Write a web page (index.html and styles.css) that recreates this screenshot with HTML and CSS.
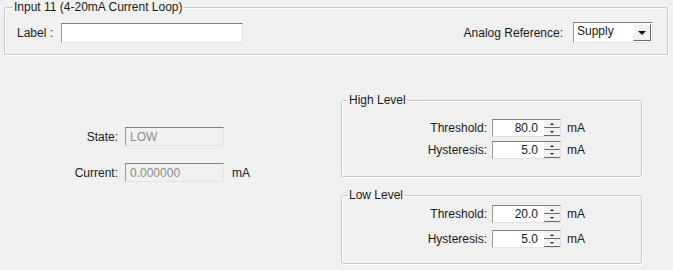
FILE: index.html
```html
<!DOCTYPE html>
<html lang="en">

<head>
  <meta charset="UTF-8">
  <title>Input 11 Settings</title>
  <link rel="stylesheet" href="styles.css">
</head>

<body>

  <!-- Input Header Group -->
  <fieldset class="group group-input">
    <legend>Input 11 (4-20mA Current Loop)</legend>
    <div class="top-row">
      <label class="field">
        <span>Label :</span>
        <input type="text" class="text-box label-box">
      </label>
      <label class="field">
        <span>Analog Reference:</span>
        <span class="combo">
          <span class="combo-value">Supply</span>
          <span class="combo-btn"><span class="arrow-down"></span></span>
        </span>
      </label>
    </div>
  </fieldset>

  <div class="main">

    <!-- Live Status -->
    <div class="status">
      <span class="status-label">State:</span>
      <span class="text-box readonly">LOW</span>
      <span></span>

      <span class="status-label">Current:</span>
      <span class="text-box readonly">0.000000</span>
      <span class="unit">mA</span>
    </div>

    <!-- Level Settings -->
    <div class="levels">
      <fieldset class="group level high">
        <legend>High Level</legend>
        <div class="level-grid">
          <span class="level-label">Threshold:</span>
          <span class="spin"><span class="spin-value">80.0</span><span class="spin-btns"><span class="spin-up"></span><span class="spin-down"></span></span></span>
          <span class="unit">mA</span>

          <span class="level-label">Hysteresis:</span>
          <span class="spin"><span class="spin-value">5.0</span><span class="spin-btns"><span class="spin-up"></span><span class="spin-down"></span></span></span>
          <span class="unit">mA</span>
        </div>
      </fieldset>

      <fieldset class="group level low">
        <legend>Low Level</legend>
        <div class="level-grid">
          <span class="level-label">Threshold:</span>
          <span class="spin"><span class="spin-value">20.0</span><span class="spin-btns"><span class="spin-up"></span><span class="spin-down"></span></span></span>
          <span class="unit">mA</span>

          <span class="level-label">Hysteresis:</span>
          <span class="spin"><span class="spin-value">5.0</span><span class="spin-btns"><span class="spin-up"></span><span class="spin-down"></span></span></span>
          <span class="unit">mA</span>
        </div>
      </fieldset>
    </div>

  </div>

</body>

</html>
```

FILE: styles.css
```css
/* General Page Styles */
body {
  margin: 0;
  background: #f0f0f0;
  font-family: 'Liberation Sans', Arial, sans-serif;
  font-size: 12px;
  color: #1a1a1a;
  width: 673px;
  height: 270px;
  overflow: hidden;
}

/* Group Boxes */
.group {
  border: 1px solid #c9c9c9;
  border-radius: 2px;
  margin: 0;
  min-width: 0;
  box-shadow: inset 1px 1px 0 #fff, 1px 1px 0 #fff;
}

.group legend {
  padding: 0 1px;
  margin-left: 6px;
  line-height: 14px;
}

.group-input {
  margin: 0 5px 0 4px;
  padding: 8px 14px 11px 12px;
}

.group-input legend {
  margin-left: -4px;
}

.top-row {
  display: flex;
  justify-content: space-between;
  align-items: center;
}

.field {
  display: flex;
  align-items: center;
  gap: 8px;
}

.field + .field {
  gap: 10px;
}

/* Text Boxes */
.text-box {
  box-sizing: border-box;
  height: 20px;
  border: 1px solid #e3e3e3;
  border-top-color: #7f7f7f;
  border-left-color: #9a9a9a;
  background: #fff;
  font: inherit;
  padding: 0 4px;
  margin: 0;
  outline: none;
}

.label-box {
  width: 182px;
}

.readonly {
  display: flex;
  align-items: center;
  width: 99px;
  height: 19px;
  background: #f0f0f0;
  color: #8d8d8d;
}

/* Combo Box */
.combo {
  box-sizing: border-box;
  display: flex;
  width: 80px;
  height: 21px;
  border: 1px solid #e3e3e3;
  border-top-color: #7f7f7f;
  border-left-color: #9a9a9a;
  background: #fff;
}

.combo-value {
  flex: 1;
  padding: 1px 3px;
}

.combo-btn {
  box-sizing: border-box;
  width: 18px;
  margin: 1px;
  background: #f0f0f0;
  border: 1px solid #fff;
  border-right-color: #6a6a6a;
  border-bottom-color: #6a6a6a;
  display: flex;
  align-items: center;
  justify-content: center;
}

.arrow-down {
  border-left: 4px solid transparent;
  border-right: 4px solid transparent;
  border-top: 4px solid #111;
  margin-top: 1px;
}

/* Main Area */
.main {
  display: flex;
}

.status {
  width: 341px;
  padding-top: 72px;
  display: grid;
  grid-template-columns: 118px 99px auto;
  grid-auto-rows: 19px;
  column-gap: 7px;
  row-gap: 17px;
  align-content: start;
  align-items: center;
}

.status-label,
.level-label {
  text-align: right;
}

.unit {
  padding-left: 1px;
}

/* Level Groups */
.levels {
  width: 301px;
  margin-top: 38px;
  display: flex;
  flex-direction: column;
  gap: 11px;
}

.level {
  padding: 0;
}

.high {
  padding: 12px 0 17px;
}

.low {
  padding: 3px 0 15px;
}

.level-grid {
  display: grid;
  grid-template-columns: 145px 69px auto;
  grid-auto-rows: 18px;
  column-gap: 5px;
  row-gap: 4px;
  align-items: center;
}

.low .level-grid {
  row-gap: 7px;
}

/* Spin Boxes */
.spin {
  box-sizing: border-box;
  display: flex;
  height: 18px;
  border: 1px solid #e3e3e3;
  border-top-color: #7f7f7f;
  border-left-color: #9a9a9a;
  background: #fff;
}

.spin-value {
  flex: 1;
  text-align: right;
  padding-right: 6px;
  line-height: 16px;
}

.spin-btns {
  width: 16px;
  display: flex;
  flex-direction: column;
}

.spin-up,
.spin-down {
  flex: 1;
  box-sizing: border-box;
  background: #f0f0f0;
  border-bottom: 1px solid #6a6a6a;
  display: flex;
  align-items: center;
  justify-content: center;
}

.spin-up::after,
.spin-down::after {
  content: "";
  border-left: 2px solid transparent;
  border-right: 2px solid transparent;
}

.spin-up::after {
  border-bottom: 2px solid #222;
}

.spin-down::after {
  border-top: 2px solid #222;
}
```
